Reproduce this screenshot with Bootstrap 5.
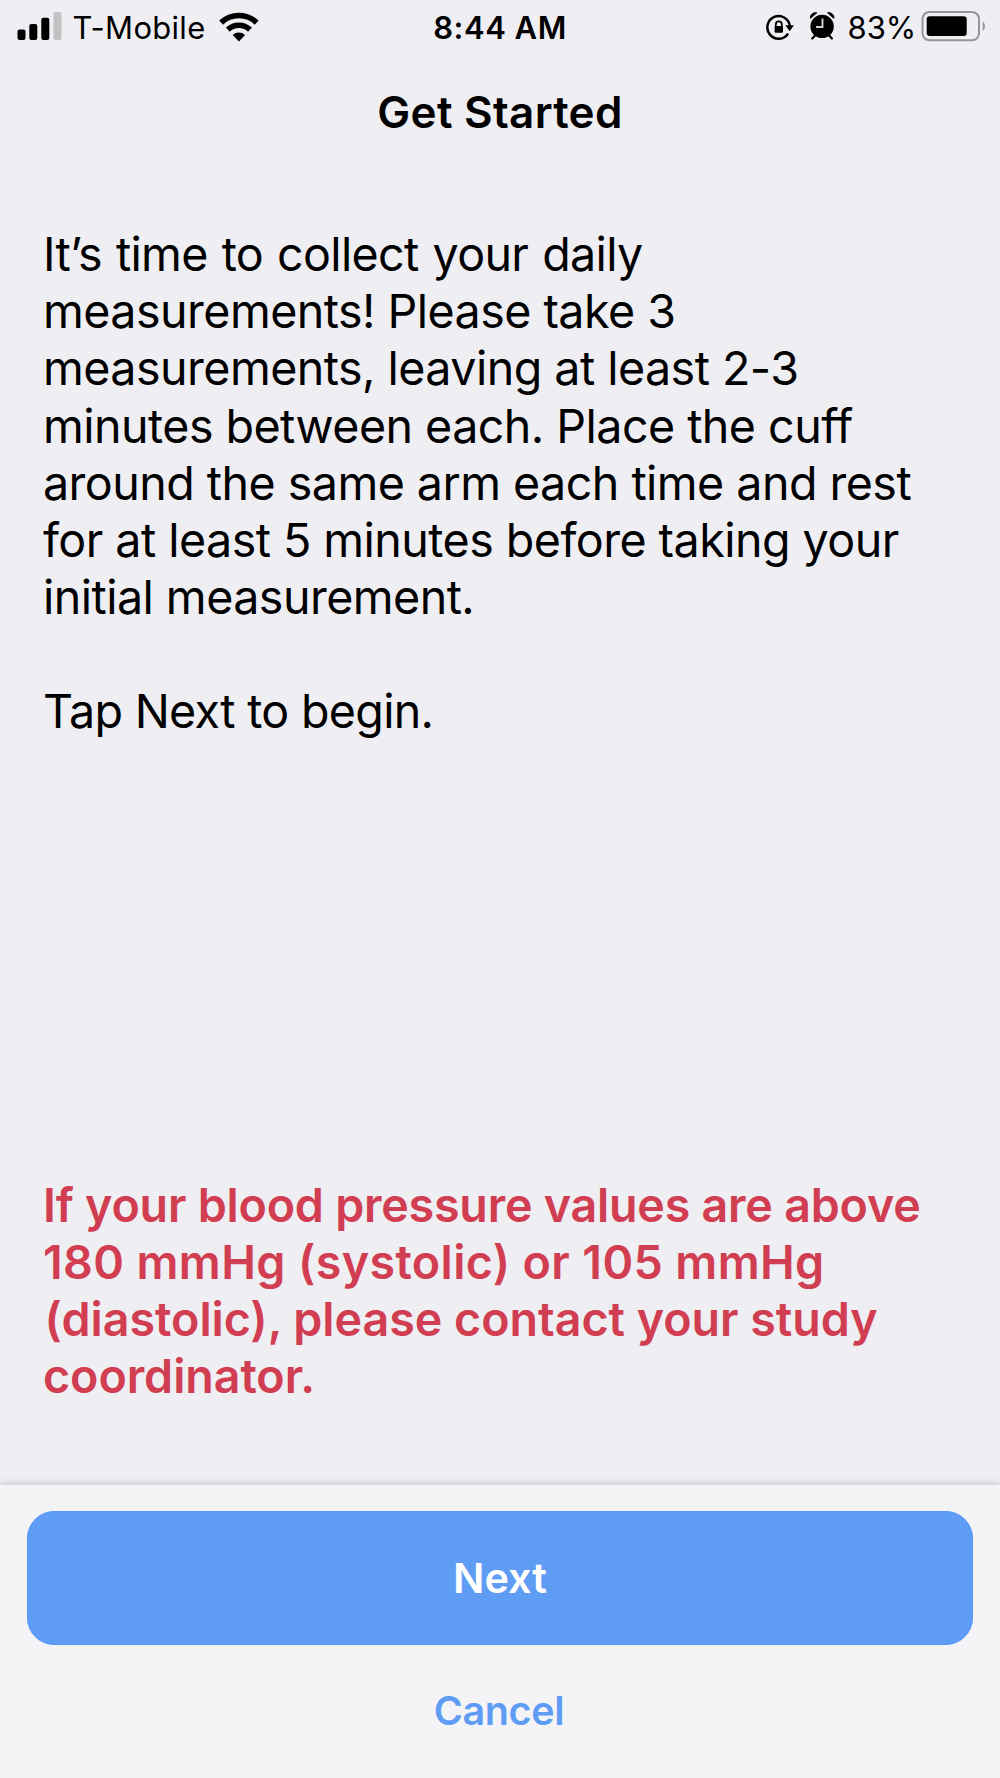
<!DOCTYPE html>
<html lang="en">
<head>
<meta charset="utf-8">
<meta name="viewport" content="width=device-width, initial-scale=1">
<title>Get Started</title>
<link href="https://cdn.jsdelivr.net/npm/bootstrap@5.3.0/dist/css/bootstrap.min.css" rel="stylesheet">
<style>
  body { background: #efeef3; color: #000; font-family: Inter, "Liberation Sans", sans-serif; }
  .screen { height: 1778px; }
  .status-bar { height: 55px; padding: 0 14px 0 17px; font-size: 31px; line-height: 1; }
  .status-side { flex: 1 1 0; }
  .carrier { margin: 0 12px 0 9.5px; letter-spacing: .3px; }
  .clock { font-weight: 600; letter-spacing: .5px; margin: 0 1.5px 0 -1.5px; }
  .percent { letter-spacing: -.1px; margin: 0 5px 0 13px; }
  .title-bar { height: 113px; padding-top: 1.5px; font-size: 44px; font-weight: 600; letter-spacing: .3px; }
  .content { padding: 58px 43px 80px; font-size: 46.6px; }
  .content p span { display: block; white-space: nowrap; }
  .intro { line-height: 57.17px; letter-spacing: -.54px; }
  .intro .opening { letter-spacing: -.66px; word-spacing: 1.5px; }
  .intro .closing { letter-spacing: -.69px; }
  .warning { line-height: 56.9px; font-weight: 600; color: #d13e52; letter-spacing: -.06px; }
  .warning .first { letter-spacing: -.22px; }
  .warning .limits { letter-spacing: .38px; }
  .warning .hanging { padding-left: 1.5px; letter-spacing: -.02px; }
  .action-bar { height: 293.5px; padding: 26.5px 27px 0; background: #f4f4f6; box-shadow: 0 -2px 6px rgba(0, 0, 0, .15); }
  .btn-next { --bs-btn-bg: #5f9df5; --bs-btn-color: #fff; --bs-btn-border-color: #5698f8; --bs-btn-border-radius: 27px;
    --bs-btn-hover-bg: #5290ea; --bs-btn-hover-color: #fff; height: 133.5px; font-size: 41.4px; font-weight: 600; }
  .btn-cancel { --bs-btn-color: #5f9df5; --bs-btn-hover-color: #4788e4; height: 133.5px; padding: 1px 2px 0 0; font-size: 39.5px; font-weight: 600; letter-spacing: -.4px; text-decoration: none; }
</style>
</head>
<body>
<div class="screen d-flex flex-column overflow-hidden">
  <div class="status-bar d-flex align-items-center flex-shrink-0">
    <div class="status-side d-flex align-items-center">
      <svg width="46" height="55" viewBox="17 0 46 55" aria-hidden="true">
        <rect x="17.5" y="29.5" width="8" height="10.5" rx="2"/>
        <rect x="29.3" y="24" width="8" height="16" rx="2"/>
        <rect x="41.3" y="17.7" width="8" height="22.3" rx="2"/>
        <rect x="53.5" y="12" width="8" height="28" rx="2" fill="#c2c1c4"/>
      </svg>
      <span class="carrier">T-Mobile</span>
      <svg width="42" height="55" viewBox="217.3 0 42 55" fill="none" stroke="#000" stroke-width="5.6" aria-hidden="true">
        <path d="M220.4 22.6a25.9 25.9 0 0 1 35.6 0"/>
        <path d="M227.1 29.6a16.2 16.2 0 0 1 22.2 0"/>
        <path d="M232 35a9.2 9.2 0 0 1 12.4 0l-6.2 6.5z" fill="#000" stroke="none"/>
      </svg>
    </div>
    <div class="clock">8:44 AM</div>
    <div class="status-side d-flex align-items-center justify-content-end">
      <svg width="70" height="55" viewBox="765.5 0 70 55" aria-hidden="true">
        <g fill="none" stroke="#000" stroke-width="2.5">
          <path d="M790.4 26.3A11.3 11.3 0 1 0 788.6 33.6"/>
          <path d="M776.3 27v-2.6a3 3 0 0 1 6 0V27" stroke-width="1.8"/>
        </g>
        <path d="M785.8 25.2h8.6l-4.2 6z"/>
        <rect x="775.1" y="26" width="8.4" height="6.8" rx="1"/>
        <circle cx="822.6" cy="26.4" r="11.7"/>
        <path d="M811 18.3c-.6-3.6 2.5-6.2 6.300-5.500zM834.300 18.300c.6-3.600-2.500-6.200-6.300-5.500z" stroke="#000"/>
        <path d="M815.5 35.5l-2.700 3M829.700 35.500l2.700 3" stroke="#000" stroke-width="2.2" stroke-linecap="round"/>
        <path d="M823 18.500v8.500h-6.500" fill="none" stroke="#d2d1d5" stroke-width="1.9"/>
      </svg>
      <span class="percent">83%</span>
      <svg width="65" height="55" viewBox="921 0 65 55" aria-hidden="true">
        <rect x="922.5" y="12" width="56.5" height="28.3" rx="7" fill="none" stroke="#959499" stroke-width="2"/>
        <rect x="926.7" y="16.2" width="40" height="19.8" rx="3"/>
        <path d="M982.7 21.2c3 2.2 3 7.6 0 9.8z" fill="#959499"/>
      </svg>
    </div>
  </div>

  <h1 class="title-bar d-flex align-items-center justify-content-center flex-shrink-0 m-0">Get Started</h1>

  <main class="content d-flex flex-column flex-grow-1">
    <p class="intro m-0">
      <span class="opening">It’s time to collect your daily</span>
      <span>measurements! Please take 3</span>
      <span>measurements, leaving at least 2-3</span>
      <span>minutes between each. Place the cuff</span>
      <span>around the same arm each time and rest</span>
      <span>for at least 5 minutes before taking your</span>
      <span>initial measurement.</span>
      <br>
      <span class="closing">Tap Next to begin.</span>
    </p>
    <p class="warning mt-auto mb-0">
      <span class="first">If your blood pressure values are above</span>
      <span class="limits">180 mmHg (systolic) or 105 mmHg</span>
      <span class="hanging">(diastolic), please contact your study</span>
      <span>coordinator.</span>
    </p>
  </main>

  <footer class="action-bar d-flex flex-column flex-shrink-0">
    <button type="button" class="btn btn-next w-100 p-0">Next</button>
    <button type="button" class="btn btn-link btn-cancel w-100">Cancel</button>
  </footer>
</div>
<script src="https://cdn.jsdelivr.net/npm/bootstrap@5.3.0/dist/js/bootstrap.bundle.min.js"></script>
</body>
</html>
